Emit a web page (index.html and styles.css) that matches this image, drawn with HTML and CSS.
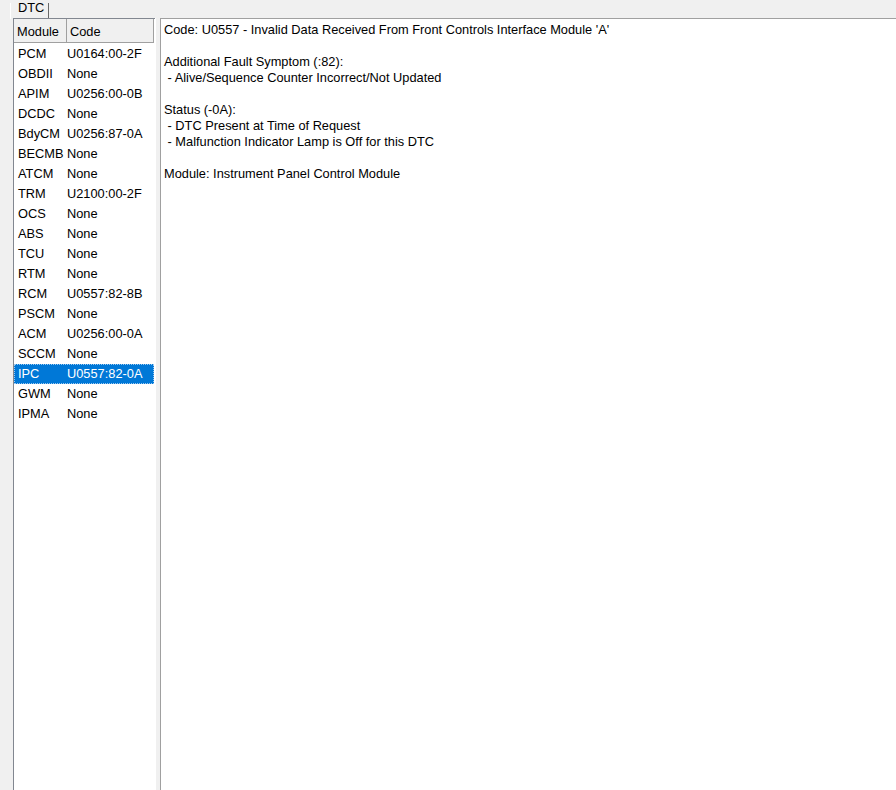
FILE: index.html
```html
<!DOCTYPE html>
<html lang="en">
  <head>
    <meta charset="UTF-8" />
    <title>DTC</title>
    <link rel="stylesheet" href="styles.css">
  </head>
  <body>
    <div class="tabbar">
      <div class="tab">DTC</div>
    </div>

    <div class="main">
      <!-- module / code list -->
      <div class="list">
        <div class="list-head">
          <div class="col-module">Module</div>
          <div class="col-code">Code</div>
        </div>
        <div class="row"><span class="col-module">PCM</span><span class="col-code">U0164:00-2F</span></div>
        <div class="row"><span class="col-module">OBDII</span><span class="col-code">None</span></div>
        <div class="row"><span class="col-module">APIM</span><span class="col-code">U0256:00-0B</span></div>
        <div class="row"><span class="col-module">DCDC</span><span class="col-code">None</span></div>
        <div class="row"><span class="col-module">BdyCM</span><span class="col-code">U0256:87-0A</span></div>
        <div class="row"><span class="col-module">BECMB</span><span class="col-code">None</span></div>
        <div class="row"><span class="col-module">ATCM</span><span class="col-code">None</span></div>
        <div class="row"><span class="col-module">TRM</span><span class="col-code">U2100:00-2F</span></div>
        <div class="row"><span class="col-module">OCS</span><span class="col-code">None</span></div>
        <div class="row"><span class="col-module">ABS</span><span class="col-code">None</span></div>
        <div class="row"><span class="col-module">TCU</span><span class="col-code">None</span></div>
        <div class="row"><span class="col-module">RTM</span><span class="col-code">None</span></div>
        <div class="row"><span class="col-module">RCM</span><span class="col-code">U0557:82-8B</span></div>
        <div class="row"><span class="col-module">PSCM</span><span class="col-code">None</span></div>
        <div class="row"><span class="col-module">ACM</span><span class="col-code">U0256:00-0A</span></div>
        <div class="row"><span class="col-module">SCCM</span><span class="col-code">None</span></div>
        <div class="row selected"><span class="col-module">IPC</span><span class="col-code">U0557:82-0A</span></div>
        <div class="row"><span class="col-module">GWM</span><span class="col-code">None</span></div>
        <div class="row"><span class="col-module">IPMA</span><span class="col-code">None</span></div>
      </div>

      <div class="gap"></div>

      <!-- details of the selected code -->
      <div class="detail">
        <p>Code: U0557 - Invalid Data Received From Front Controls Interface Module 'A'</p>
        <p>Additional Fault Symptom (:82):<br> - Alive/Sequence Counter Incorrect/Not Updated</p>
        <p>Status (-0A):<br> - DTC Present at Time of Request<br> - Malfunction Indicator Lamp is Off for this DTC</p>
        <p>Module: Instrument Panel Control Module</p>
      </div>
    </div>
  </body>
</html>
```

FILE: styles.css
```css
html,
body {
  height: 100%;
}

body {
  margin: 0;
  background-color: #f0f0f0;
  font-family: "Liberation Sans", Arial, sans-serif;
  font-size: 12.8px;
  color: #000;
  display: flex;
  flex-direction: column;
  overflow: hidden;
}

/* Tab strip */
.tabbar {
  height: 18px;
  padding-left: 10px;
  flex-shrink: 0;
}

.tab {
  display: inline-block;
  width: 39px;
  height: 16px;
  line-height: 10px;
  padding-left: 7px;
  box-sizing: border-box;
  border-left: 1px solid #fff;
  border-right: 1px solid #696969;
}

.main {
  flex: 1;
  display: flex;
  padding-left: 13px;
  min-height: 0;
}

/* List view */
.list {
  width: 142px;
  background: #fff;
  border-left: 1px solid #828790;
  border-top: 1px solid #828790;
  box-sizing: border-box;
}

.list-head {
  display: flex;
  height: 24px;
  line-height: 25px;
  background: #f0f0f0;
  width: 140px;
}

.list-head div {
  box-sizing: border-box;
  padding-left: 3px;
  border-right: 1px solid #a0a0a0;
  border-bottom: 1px solid #a0a0a0;
}

.list-head .col-module {
  width: 53px;
}

.list-head .col-code {
  width: 87px;
}

.list-head + .row {
  margin-top: 1px;
}

.row {
  display: flex;
  height: 20px;
  line-height: 19px;
  width: 140px;
  box-sizing: border-box;
}

.row .col-module {
  width: 49px;
  padding-left: 4px;
}

.row .col-code {
  flex: 1;
}

.row.selected {
  background: #0078d7;
  color: #fff;
  outline: 1px dotted #9cc9f0;
  outline-offset: -1px;
}

.gap {
  width: 4px;
  background: #f0f0f0;
  border-left: 1px solid #fff;
}

/* Detail text */
.detail {
  flex: 1;
  background: #fff;
  border-left: 1px solid #a0a0a0;
  border-top: 1px solid #a0a0a0;
  padding: 3px 3px;
  line-height: 16px;
}

.detail p {
  margin: 0 0 16px 0;
  white-space: pre;
}
```
